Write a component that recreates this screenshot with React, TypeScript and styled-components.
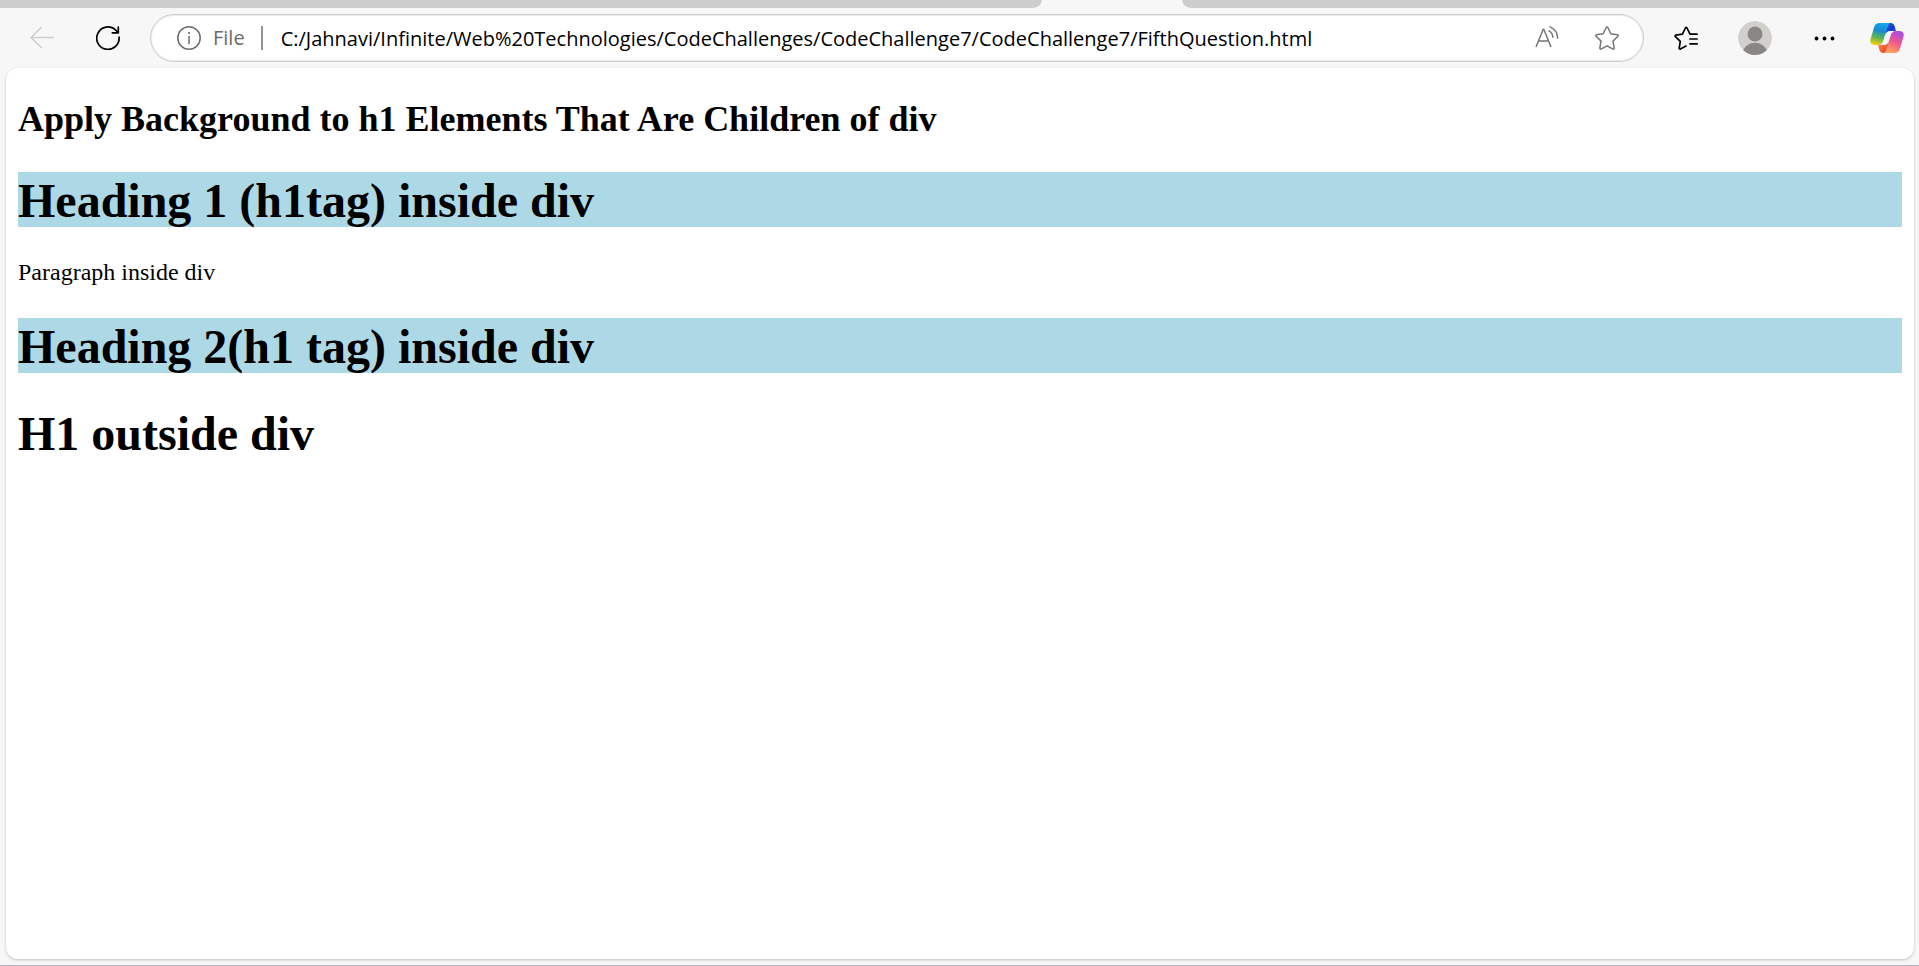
import React, { useState } from "react";
import styled, { createGlobalStyle } from "styled-components";

const GlobalStyle = createGlobalStyle`
  *, *::before, *::after { box-sizing: border-box; }
  body { margin: 0; background: #f7f7f7; }
`;

const Window = styled.div`
  display: flex;
  flex-direction: column;
  min-height: 100vh;
  background: #f7f7f7;
  border-bottom: 1px solid #b4b5bf;
`;

const TabStrip = styled.div`
  display: flex;
  height: 8px;
`;

const InactiveTabs = styled.div<{ $side: "left" | "right" }>`
  flex: ${(p) => (p.$side === "left" ? "1042 1 0" : "737 1 0")};
  background: #cdcdcd;
  border-radius: ${(p) => (p.$side === "left" ? "0 0 10px 0 / 0 0 8px 0" : "0 0 0 10px / 0 0 0 8px")};
`;

const ActiveTab = styled.div`
  flex: 140 1 0;
`;

const Toolbar = styled.nav`
  display: flex;
  align-items: center;
  gap: 18px;
  height: 60px;
  padding: 0 11px 0 18px;
`;

const ToolButton = styled.button<{ $width?: number }>`
  flex: none;
  display: flex;
  align-items: center;
  justify-content: center;
  width: ${(p) => p.$width ?? 48}px;
  height: 42px;
  padding: 0;
  border: 0;
  background: transparent;
  color: #000;
  &:disabled { color: #cdcdcd; }
  svg { display: block; }
`;

const AddressBar = styled.form`
  flex: 1;
  min-width: 0;
  display: flex;
  align-items: center;
  height: 48px;
  padding: 0 6px 0 26px;
  border: 1px solid #cdcdcd;
  border-radius: 24px;
  background: #fff;
  box-shadow: inset 0 0 0 1px #ededed;
  color: #767676;
`;

const SiteInfo = styled.button`
  flex: none;
  display: flex;
  align-items: center;
  gap: 12px;
  height: 42px;
  padding: 0;
  border: 0;
  background: transparent;
  color: #6b6b6b;
  font: 20px/28px "Open Sans", "Noto Sans", sans-serif;
`;

const Divider = styled.span`
  flex: none;
  width: 2px;
  height: 24px;
  margin: 0 18px 0 16px;
  background: #949494;
`;

const UrlInput = styled.input`
  flex: 1;
  min-width: 0;
  height: 42px;
  padding: 0;
  border: 0;
  outline: 0;
  background: transparent;
  color: #000;
  font: 20px/28px "Open Sans", "Noto Sans", sans-serif;
`;

const BarButton = styled(ToolButton)`
  width: 60px;
  color: #767676;
`;

const Page = styled.main`
  flex: 1;
  margin: 0 5px 6px 6px;
  padding: 30px 12px;
  border-radius: 12px;
  background: #fff;
  box-shadow: 0 1px 3px rgba(0, 0, 0, 0.22);
  color: #000;
  font: 24px/27px "Liberation Serif", "Times New Roman", serif;
`;

const Title = styled.h2`
  margin: 0 0 32px;
  font-size: 36px;
  line-height: 42px;
`;

const Heading = styled.h1`
  margin: 32px 0;
  padding-top: 2px;
  font-size: 48px;
  line-height: 53px;
`;

const Section = styled.div`
  ${Heading} { background: lightblue; }
`;

const Paragraph = styled.p`
  margin: 24px 0;
`;

const line = {
  fill: "none",
  stroke: "currentColor",
  strokeLinecap: "round" as const,
  strokeLinejoin: "round" as const,
};

const BackIcon = () => (
  <svg width="24" height="24" viewBox="0 0 24 24" {...line} strokeWidth="1.5">
    <path d="M11.5 1.3 1 11.5l10.500 10.200M1 11.500h22.500" />
  </svg>
);

const ReloadIcon = () => (
  <svg width="24" height="24" viewBox="0 0 24 24" {...line} strokeWidth="1.7">
    <path d="M23.1 11.200A11.200 11.200 0 1 1 19.600 4L22 6.500M22.300 1v5.800h-6" />
  </svg>
);

const InfoIcon = () => (
  <svg width="24" height="24" viewBox="0 0 24 24" {...line} strokeWidth="1.5">
    <circle cx="12" cy="12" r="11.200" />
    <path d="M12 10.500v7" />
    <circle cx="12" cy="7" r="1.100" fill="currentColor" stroke="none" />
  </svg>
);

const ReadAloudIcon = () => (
  <svg width="24" height="24" viewBox="0 0 24 24" {...line} strokeWidth="1.5">
    <path d="m1.200 20.500 7-17.200h.6l7 17.200M3.500 15h10" />
    <path d="M14 4.800c2.300 1.300 3.700 3.500 3.900 6.300M15 .9c4.600 2 7.500 6 7.600 11" />
  </svg>
);

const StarIcon = () => (
  <svg width="24" height="24" viewBox="0 0 24 24" {...line} strokeWidth="1.5">
    <path d="M11.200 1.500q.8-1.200 1.600 0l3 6.300 6.700 1q1.200.4.4 1.500l-4.900 4.800 1.200 7q0 1.200-1.200 1l-6-3.200-6 3.200q-1.200.2-1.200-1l1.200-7L1.100 10.300q-.8-1.100.4-1.500l6.700-1z" />
  </svg>
);

const FavoritesIcon = () => (
  <svg width="24" height="24" viewBox="0 0 24 24" {...line} strokeWidth="1.700">
    <path d="M23 8.200h-7L13 2q-.8-1.100-1.600 0l-3 6.200-6.600 1q-1.200.4-.4 1.500l4.900 4.700-1.100 6.700q0 1.200 1.200 1l5.600-3" />
    <path d="M16 13h7.200M16 17.800h7.200" />
  </svg>
);

const AvatarIcon = () => (
  <svg width="34" height="34" viewBox="0 0 34 34">
    <defs>
      <clipPath id="avatarClip"><circle cx="17" cy="17" r="17" /></clipPath>
    </defs>
    <g clipPath="url(#avatarClip)">
      <circle cx="17" cy="17" r="17" fill="#d2d0cc" />
      <circle cx="17" cy="13" r="7.500" fill="#8a8683" />
      <path d="M4.500 30.500C7 24.500 11.500 21.700 17 21.700s10 2.800 12.500 8.800L26 36H8z" fill="#8a8683" />
    </g>
  </svg>
);

const MoreIcon = () => (
  <svg width="24" height="24" viewBox="0 0 24 24" fill="currentColor">
    <circle cx="4.500" cy="12.500" r="1.900" />
    <circle cx="12.500" cy="12.500" r="1.900" />
    <circle cx="20.500" cy="12.500" r="1.900" />
  </svg>
);

const CopilotIcon = () => (
  <svg width="34" height="32" viewBox="0 0 34 32">
    <defs>
      <linearGradient id="cpBlue" x1=".6" y1="0" x2=".35" y2="1">
        <stop offset="0" stopColor="#16a7ee" />
        <stop offset=".35" stopColor="#168bd6" />
        <stop offset=".68" stopColor="#5cb554" />
        <stop offset="1" stopColor="#f2cb10" />
      </linearGradient>
      <linearGradient id="cpPink" x1=".75" y1="0" x2=".35" y2="1">
        <stop offset="0" stopColor="#a44bea" />
        <stop offset=".5" stopColor="#f0588c" />
        <stop offset="1" stopColor="#ffa85a" />
      </linearGradient>
      <linearGradient id="cpNavy" x1="0" y1="0" x2="1" y2=".8">
        <stop offset="0" stopColor="#1a78e8" />
        <stop offset=".6" stopColor="#1737c4" />
        <stop offset="1" stopColor="#2b60d8" />
      </linearGradient>
      <linearGradient id="cpRed" x1="0" y1="0" x2="1" y2="1">
        <stop offset="0" stopColor="#ff9744" />
        <stop offset="1" stopColor="#e3362e" />
      </linearGradient>
    </defs>
    <path d="M17 1h3.500c2.500 0 3.600 1.500 4.300 3.800L26 9h-6c-3 0-4 2-4.700 4z" fill="url(#cpNavy)" />
    <path d="M17 31h-3.500c-2.500 0-3.600-1.500-4.300-3.800L8 23h6c3 0 4-2 4.700-4z" fill="url(#cpRed)" />
    <path d="M9.500 1H21c-2 0-2.800 1.700-3.500 4l-4.200 13.500C12.300 21.500 11 23 8 23H5c-4 0-5.500-2.500-4.300-6.500L4 5.500C5 2.500 6.500 1 9.500 1z" fill="url(#cpBlue)" />
    <path d="M24.500 31H13c2 0 2.800-1.700 3.500-4l4.200-13.500C21.700 10.500 23 9 26 9h3c4 0 5.500 2.500 4.300 6.500L30 26.500c-1 3-2.500 4.500-5.500 4.500z" fill="url(#cpPink)" />
  </svg>
);

export default function App() {
  const [url, setUrl] = useState(
    "C:/Jahnavi/Infinite/Web%20Technologies/CodeChallenges/CodeChallenge7/CodeChallenge7/FifthQuestion.html"
  );

  return (
    <>
      <GlobalStyle />
      <Window>
        <TabStrip>
          <InactiveTabs $side="left" />
          <ActiveTab />
          <InactiveTabs $side="right" />
        </TabStrip>
        <Toolbar aria-label="Browser toolbar">
          <ToolButton aria-label="Back" disabled><BackIcon /></ToolButton>
          <ToolButton aria-label="Refresh"><ReloadIcon /></ToolButton>
          <AddressBar onSubmit={(e) => e.preventDefault()}>
            <SiteInfo type="button"><InfoIcon />File</SiteInfo>
            <Divider />
            <UrlInput
              aria-label="Address"
              spellCheck={false}
              value={url}
              onChange={(e) => setUrl(e.target.value)}
            />
            <BarButton type="button" aria-label="Read aloud"><ReadAloudIcon /></BarButton>
            <BarButton type="button" aria-label="Add to favorites"><StarIcon /></BarButton>
          </AddressBar>
          <ToolButton aria-label="Favorites"><FavoritesIcon /></ToolButton>
          <ToolButton aria-label="Profile" $width={54}><AvatarIcon /></ToolButton>
          <ToolButton aria-label="Settings and more"><MoreIcon /></ToolButton>
          <ToolButton aria-label="Copilot" $width={42}><CopilotIcon /></ToolButton>
        </Toolbar>
        <Page>
          <Title>Apply Background to h1 Elements That Are Children of div</Title>
          <Section>
            <Heading>Heading 1 (h1tag) inside div</Heading>
            <Paragraph>Paragraph inside div</Paragraph>
            <Heading>Heading 2(h1 tag) inside div</Heading>
          </Section>
          <Heading>H1 outside div</Heading>
        </Page>
      </Window>
    </>
  );
}
